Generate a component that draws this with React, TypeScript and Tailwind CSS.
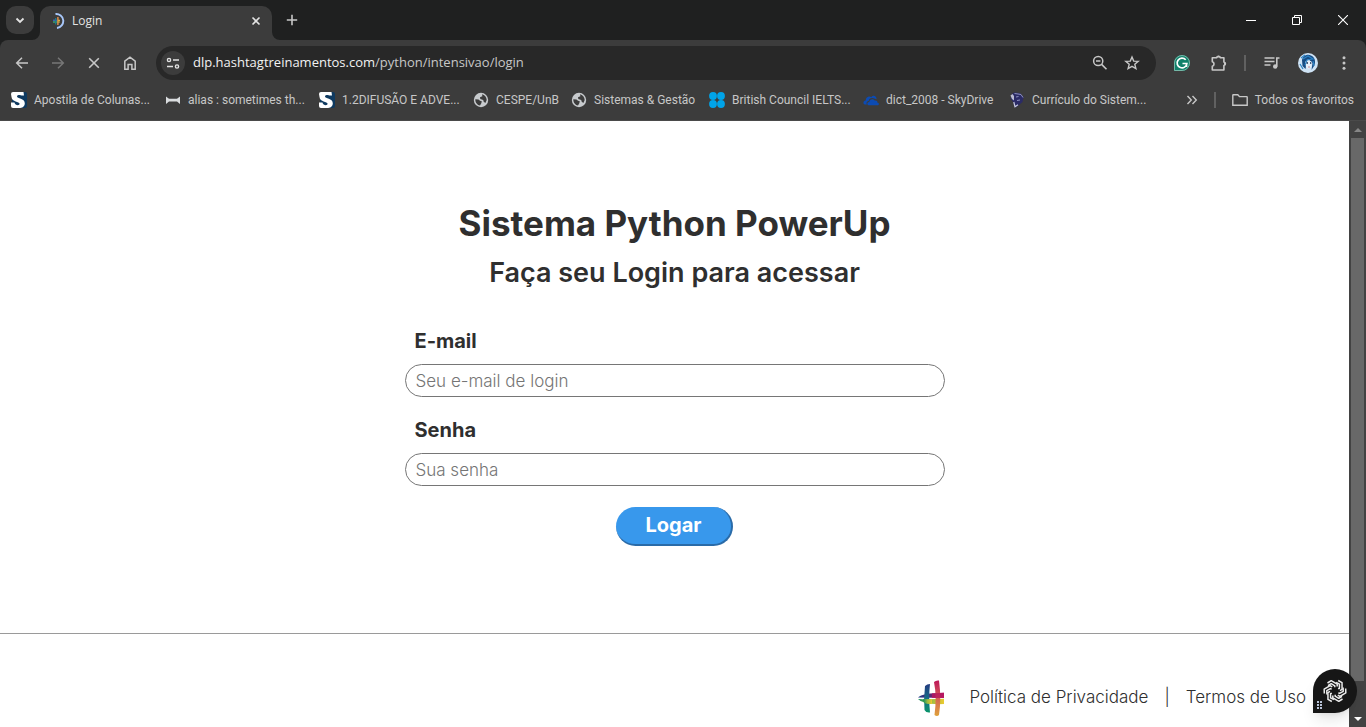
import type { ReactNode } from "react";

type IconProps = { className?: string; children: ReactNode; size?: number; viewBox?: string };

function Icon({ className = "", children, size = 16, viewBox = "0 0 16 16" }: IconProps) {
  return (
    <svg
      width={size}
      height={size}
      viewBox={viewBox}
      fill="none"
      stroke="currentColor"
      strokeWidth="1.5"
      className={"shrink-0 " + className}
      aria-hidden="true"
    >
      {children}
    </svg>
  );
}

function ScribdIcon() {
  return (
    <Icon>
      <rect x="1" width="15" height="16" rx="2" fill="#0f3a60" stroke="none" />
      <path d="M0 2Q0 0 2 0H12.500L13 3.500H10.500C9.500 2.700 6 2.700 6 4.600C6 7 13.800 6.200 13.800 11.200C13.800 14.500 11 16 8 16H2Q0 16 0 14V10.500H3.500C4 13.800 8.800 13.700 8.600 11.800C8.400 9.700 1 10 .500 5Z" fill="#fff" stroke="none" />
    </Icon>
  );
}

function BoneIcon() {
  return (
    <Icon>
      <path d="M1 4.500L4 6.700H12L15 4.500V12L12 9.600H4L1 12Z" fill="#d9dcde" stroke="none" />
    </Icon>
  );
}

function GlobeIcon() {
  return (
    <Icon>
      <circle cx="8" cy="8" r="7.200" fill="#c7cacd" stroke="none" />
      <path d="M2.300 7.200L5.500 7.400L7 8.800L8.800 9.300L8.300 11.200L7 13.500C4.500 13.300 2.200 10.600 2.300 7.200ZM9 2.300C11.700 2.900 13.600 5.200 13.700 8L12.400 11L10.700 9.800L10.200 7.900L7.300 6.900L7 5.200L9.400 4.200Z" fill="#3c3c3c" stroke="none" />
    </Icon>
  );
}

function BritishCouncilIcon() {
  return (
    <Icon>
      <g fill="#00a3e8" stroke="none">
        <circle cx="4" cy="4" r="3.900" />
        <circle cx="12" cy="4" r="3.900" />
        <circle cx="4" cy="12" r="3.900" />
        <circle cx="12" cy="12" r="3.900" />
      </g>
    </Icon>
  );
}

function CloudIcon() {
  return (
    <Icon>
      <path d="M2.500 12.500C-.500 12.500 0 8.500 2.700 8.600C2.600 5.200 6.200 3.500 8.300 5.200C10.200 2.300 13.800 4 13.600 7.200L10.500 6.300C8 5.600 5.800 6.800 5.700 9C3.500 9.300 3 11.300 4 12.500Z" fill="#0c4bb3" stroke="none" />
      <path d="M6 13.300C3.700 13.300 3.800 9.900 6.300 9.900C6.500 7 10.200 6.300 11.700 8.600C13.800 8 14.700 9.800 14.300 10.500C16.500 10.600 16.300 13.300 14.400 13.300Z" fill="#0c4bb3" stroke="none" />
    </Icon>
  );
}

function LattesIcon() {
  return (
    <Icon>
      <path d="M5 .500L11 1L14.500 5L13.500 10L7 15.500L5 14L4.500 10.500L1.500 6.500L3 2Z" fill="#2b2b66" stroke="none" />
      <path d="M1.500 3.500L3.500 2L5 4V8.500L3 7Z" fill="#b9bbd0" stroke="none" />
      <path d="M5.500 1.500L9 2L12 2.500L14 5.500M7 5L9.500 4.500M8 8.500L11 8" stroke="#8f92c0" strokeWidth="1" />
      <path d="M4.800 10L6 14.800L9 12.800" stroke="#c9cbe2" strokeWidth="1.200" />
    </Icon>
  );
}

const bookmarks: { label: string; icon: ReactNode; width: string }[] = [
  { label: "Apostila de Colunas...", icon: <ScribdIcon />, width: "w-[154px]" },
  { label: "alias : sometimes th...", icon: <BoneIcon />, width: "w-[154px]" },
  { label: "1.2DIFUSÃO E ADVE...", icon: <ScribdIcon />, width: "w-[154px]" },
  { label: "CESPE/UnB", icon: <GlobeIcon />, width: "w-[98px]" },
  { label: "Sistemas & Gestão", icon: <GlobeIcon />, width: "w-[138px]" },
  { label: "British Council IELTS...", icon: <BritishCouncilIcon />, width: "w-[154px]" },
  { label: "dict_2008 - SkyDrive", icon: <CloudIcon />, width: "w-[146px]" },
  { label: "Currículo do Sistem...", icon: <LattesIcon />, width: "w-[154px]" },
];

function TabStrip() {
  return (
    <header className="flex h-10 shrink-0 items-end bg-[#1f2020] pl-1.5 text-[#e3e3e3]">
      <button aria-label="Pesquisar guias" className="mb-1.5 flex size-7 items-center justify-center rounded-[10px] bg-[#3c3c3c]">
        <Icon>
          <path d="M4.500 6.500L8 10L11.500 6.500" strokeWidth="1.800" />
        </Icon>
      </button>
      <div className="relative ml-1.5 flex h-[34px] w-[232px] items-center rounded-t-[10px] bg-[#3c3c3c] pr-2 pl-2.5">
        <svg className="absolute bottom-0 -left-2" width="8" height="8" aria-hidden="true">
          <path d="M8 0V8H0A8 8 0 0 0 8 0Z" fill="#3c3c3c" />
        </svg>
        <svg className="absolute -right-2 bottom-0" width="8" height="8" aria-hidden="true">
          <path d="M0 0V8H8A8 8 0 0 1 0 0Z" fill="#3c3c3c" />
        </svg>
        <Icon className="mb-1">
          <path d="M5.500 1A7 7 0 1 1 7 15" stroke="#a8c7fa" strokeWidth="1.900" />
          <path d="M3 7.300H7" stroke="#3d5fb0" strokeWidth="1.500" />
          <path d="M3 9H8" stroke="#3fa06b" strokeWidth="1.500" />
          <path d="M5.700 5V11.500" stroke="#1b7d8c" strokeWidth="1.300" />
          <path d="M7.900 4V12" stroke="#dc8a4a" strokeWidth="1.500" />
          <path d="M8 7.300H10M8 9H10" stroke="#d7b33c" strokeWidth="1.200" />
        </Icon>
        <span className="mb-1 ml-1.5 flex-1 text-xs">Login</span>
        <button aria-label="Fechar guia" className="mb-1 flex size-4 items-center justify-center">
          <Icon>
            <path d="M4.500 4.500L11.500 11.500M11.500 4.500L4.500 11.500" strokeWidth="1.600" />
          </Icon>
        </button>
      </div>
      <button aria-label="Nova guia" className="mb-1.5 ml-1.5 flex size-7 items-center justify-center text-[#c7c7c7]">
        <Icon>
          <path d="M8 2.800V13.200M2.800 8H13.200" strokeWidth="1.600" />
        </Icon>
      </button>
      <div className="ml-auto flex h-full text-white">
        <button aria-label="Minimizar" className="flex w-[46px] items-center justify-center">
          <Icon size={10} viewBox="0 0 10 10">
            <path d="M0 5.500H10" strokeWidth="1" />
          </Icon>
        </button>
        <button aria-label="Restaurar" className="flex w-[46px] items-center justify-center">
          <Icon size={10} viewBox="0 0 10 10">
            <path d="M.500 2.500H7.500V9.500H.500ZM2.500 2.500V.500H9.500V7.500H7.500" strokeWidth="1" />
          </Icon>
        </button>
        <button aria-label="Fechar" className="flex w-[46px] items-center justify-center">
          <Icon size={10} viewBox="0 0 10 10">
            <path d="M0 0L10 10M10 0L0 10" strokeWidth="1.100" />
          </Icon>
        </button>
      </div>
    </header>
  );
}

function ToolButton({ label, children, className = "" }: { label: string; children: ReactNode; className?: string }) {
  return (
    <button aria-label={label} className={"flex h-8 w-9 shrink-0 items-center justify-center " + className}>
      {children}
    </button>
  );
}

function Toolbar() {
  return (
    <div className="flex h-[46px] items-center px-1 text-[#c7c7c7]">
      <ToolButton label="Voltar">
        <Icon>
          <path d="M14 8H3M8 2.700L2.700 8L8 13.300" />
        </Icon>
      </ToolButton>
      <ToolButton label="Avançar" className="text-[#777777]">
        <Icon>
          <path d="M2 8H13M8 2.700L13.300 8L8 13.300" />
        </Icon>
      </ToolButton>
      <ToolButton label="Parar">
        <Icon>
          <path d="M3.200 3.200L12.800 12.800M12.800 3.200L3.200 12.800" strokeWidth="1.600" />
        </Icon>
      </ToolButton>
      <ToolButton label="Página inicial">
        <Icon>
          <path d="M2.800 6.200L8 2.100L13.200 6.200V14.200H9.900V9.400H6.100V14.200H2.800Z" />
        </Icon>
      </ToolButton>
      <div className="ml-2 flex h-[34px] flex-1 items-center rounded-full bg-[#282828] pr-2 pl-[5px]">
        <button aria-label="Informações do site" className="flex size-6 shrink-0 items-center justify-center rounded-full bg-[#3c3c3c] text-[#e3e3e3]">
          <Icon>
            <path d="M8 5H14M2 11.500H8" strokeWidth="1.400" />
            <circle cx="4" cy="5" r="1.600" strokeWidth="1.400" />
            <circle cx="12" cy="11.500" r="1.600" strokeWidth="1.400" />
          </Icon>
        </button>
        <div className="ml-2 flex-1 text-[13px] whitespace-nowrap text-[#c7c7c7]">
          <span className="text-[#f2f2f2]">dlp.hashtagtreinamentos.com</span>/python/intensivao/login
        </div>
        <button aria-label="Zoom" className="flex w-8 items-center justify-center">
          <Icon>
            <circle cx="6.200" cy="6" r="4.600" />
            <path d="M9.600 9.400L14.500 14.300M4 6H8.400" strokeWidth="1.600" />
          </Icon>
        </button>
        <button aria-label="Adicionar aos favoritos" className="flex w-8 items-center justify-center">
          <Icon>
            <path d="M8 2L9.700 6.100L14.200 6.400L10.800 9.300L11.900 13.600L8 11.300L4.100 13.600L5.200 9.300L1.800 6.400L6.300 6.100Z" strokeWidth="1.400" />
          </Icon>
        </button>
      </div>
      <ToolButton label="Grammarly" className="ml-2">
        <Icon>
          <path d="M0 8A8 8 0 1 1 8 16H0Z" fill="#11806a" stroke="none" />
          <path d="M.500 15.500V8A7.500 7.500 0 1 1 8 15.500Z" stroke="#8fc5b8" strokeWidth=".800" />
          <path d="M11.700 4.700A4.900 4.900 0 1 0 12.900 8.500H8.500M12.500 8.500V12" stroke="#fff" strokeWidth="1.700" />
        </Icon>
      </ToolButton>
      <ToolButton label="Extensões">
        <Icon size={18} viewBox="-1 0 18 18">
          <path d="M2.300 3.700H6.600A2 2 0 0 1 10.400 3.700H13.900V8A1.900 1.900 0 0 1 13.900 11.600V16H2.300V12.300A2.400 2.400 0 0 0 2.300 7.700Z" strokeWidth="1.600" strokeLinejoin="round" />
          <path d="M6.700 3.500V2.500Q8.500 .900 10.300 2.500V3.500ZM14 8.200H15.500Q17 9.700 15.500 11.300H14Z" fill="currentColor" stroke="none" />
        </Icon>
      </ToolButton>
      <div className="mx-2 h-4 w-0.5 shrink-0 bg-[#616161]" />
      <ToolButton label="Controle de mídia">
        <Icon>
          <path d="M.500 3H10.500M.500 6.500H10.500M.500 10H6.500M15.500 3H12.800V11.500" strokeWidth="1.600" />
          <circle cx="11.200" cy="11.500" r="2.200" fill="currentColor" stroke="none" />
        </Icon>
      </ToolButton>
      <ToolButton label="Perfil">
        <Icon size={20} viewBox="0 0 20 20">
          <circle cx="10" cy="10" r="10" fill="#cfe3f5" stroke="none" />
          <path d="M4 7C5 3 9 .500 13 2.500C17 4 18 9 16 13L13.500 17L14.500 10L10 6L8.500 10L7.500 16L4.500 13Z" fill="#174b83" stroke="none" />
          <path d="M7 9L10 6.500L14 9L13 14L10.500 16L8 14Z" fill="#e7eef8" stroke="none" />
          <path d="M5 6L10 3L15 6L9 7L7 12M15 8L16 13M2 11L5 16M3 5L7 2" stroke="#2c83c5" strokeWidth="1.200" />
          <path d="M8.500 10H10M12 10H13.300" stroke="#122c52" strokeWidth="1.400" />
          <path d="M10 14H12" stroke="#c4737c" strokeWidth=".800" />
        </Icon>
      </ToolButton>
      <ToolButton label="Mais opções">
        <Icon>
          <g fill="currentColor" stroke="none">
            <circle cx="8" cy="2.700" r="1.500" />
            <circle cx="8" cy="8" r="1.500" />
            <circle cx="8" cy="13.300" r="1.500" />
          </g>
        </Icon>
      </ToolButton>
    </div>
  );
}

function BookmarksBar() {
  return (
    <nav aria-label="Favoritos" className="flex h-[35px] items-center border-b border-[#4a4a4a] pr-3 pb-1.5 pl-[11px] font-['Roboto',sans-serif] text-xs whitespace-nowrap text-[#c7c7c7]">
      {bookmarks.map((b) => (
        <a key={b.label} href="#" className={"flex shrink-0 items-center gap-[7px] " + b.width}>
          {b.icon}
          <span>{b.label}</span>
        </a>
      ))}
      <div className="ml-auto flex items-center">
        <button aria-label="Mais favoritos">
          <Icon>
            <path d="M3.500 4L7.300 8L3.500 12M8.500 4L12.300 8L8.500 12" strokeWidth="1.400" />
          </Icon>
        </button>
        <div className="mr-4 ml-3.5 h-4 w-0.5 bg-[#616161]" />
        <a href="#" className="flex items-center gap-[7px]">
          <Icon>
            <path d="M.800 3.200Q.800 2.700 1.300 2.700H5.800L7.500 4.600H14.700Q15.200 4.600 15.200 5.100V13.300H.800Z" strokeWidth="1.400" />
          </Icon>
          <span>Todos os favoritos</span>
        </a>
      </div>
    </nav>
  );
}

function HashtagLogo() {
  return (
    <svg width="28" height="38" viewBox="0 0 28 38" aria-hidden="true">
      <defs>
        <linearGradient id="logo-left" x1="0" y1="0" x2="0" y2="1">
          <stop offset="0" stopColor="#243a80" />
          <stop offset=".5" stopColor="#156b87" />
          <stop offset="1" stopColor="#08956a" />
        </linearGradient>
        <linearGradient id="logo-right" x1="0" y1="0" x2="0" y2="1">
          <stop offset="0" stopColor="#bd1659" />
          <stop offset=".45" stopColor="#d45b58" />
          <stop offset="1" stopColor="#dfa23b" />
        </linearGradient>
        <linearGradient id="logo-top">
          <stop offset="0" stopColor="#173b86" />
          <stop offset=".5" stopColor="#622376" />
          <stop offset="1" stopColor="#bd1762" />
        </linearGradient>
        <linearGradient id="logo-bottom">
          <stop offset="0" stopColor="#078c5c" />
          <stop offset=".5" stopColor="#9bbc40" />
          <stop offset="1" stopColor="#ecca30" />
        </linearGradient>
      </defs>
      <path d="M1 18.500Q5 14 27 13.700V19Z" fill="url(#logo-top)" />
      <path d="M8 7Q10 5 13 5Q11.500 18 13 33.500Q9 34 7.500 31Q6.500 20 8 7Z" fill="url(#logo-left)" />
      <path d="M1 20Q13 20.500 27 19.700V25Q6 26 1 20Z" fill="url(#logo-bottom)" />
      <path d="M17 3Q19 1 22 1.500Q24.500 20 22 36Q20 38 17.500 36Q20 18 17 3Z" fill="url(#logo-right)" />
      <path d="M15 14.200Q22 13.700 27 13.700V19H15Z" fill="#b7175f" fillOpacity=".8" />
      <path d="M6 20.200L15 20.300V25Q10 25.200 7 24Z" fill="url(#logo-bottom)" />
    </svg>
  );
}

function Field({ id, label, type, placeholder }: { id: string; label: string; type: string; placeholder: string }) {
  return (
    <div className="flex flex-col">
      <label htmlFor={id} className="pl-2.5 text-[20px] leading-6 font-bold">
        {label}
      </label>
      <input
        id={id}
        type={type}
        placeholder={placeholder}
        className="mt-[11px] h-[33px] w-full rounded-full border border-[#767676] bg-white px-2.5 text-[17px] font-light placeholder:text-[#757575]"
      />
    </div>
  );
}

function AssistantWidget() {
  return (
    <button
      aria-label="Assistente"
      className="absolute right-[9px] bottom-3.5 flex size-11 items-center justify-center rounded-full rounded-bl-sm bg-[#161616] text-[#ececec] shadow-lg"
    >
      <Icon size={26} viewBox="-13 -13 26 26">
        {[0, 60, 120, 180, 240, 300].map((a) => (
          <path
            key={a}
            transform={`rotate(${a})`}
            d="M-7.500 -8L-3.800 -10.300L2.200 -6.900V-4.500M-7 -5.300L-3.800 -7.300L-.200 -5.200V-3.800"
            strokeWidth="1.500"
            strokeLinejoin="round"
          />
        ))}
      </Icon>
      <svg className="absolute bottom-1 left-1" width="5" height="8" fill="#b9c4d8" aria-hidden="true">
        <path d="M0 0H2V2H0ZM3 0H5V2H3ZM0 3H2V5H0ZM3 3H5V5H3ZM0 6H2V8H0ZM3 6H5V8H3Z" />
      </svg>
    </button>
  );
}

function Scrollbar() {
  return (
    <div className="flex w-[17px] shrink-0 flex-col items-center bg-[#424242]" aria-hidden="true">
      <div className="flex h-[17px] items-center">
        <svg width="8" height="4" fill="#868686"><path d="M0 4L4 0L8 4Z" /></svg>
      </div>
      <div className="w-[13px] flex-1 bg-[#686868]" />
      <div className="h-[29px]" />
      <div className="flex h-[17px] items-center">
        <svg width="8" height="4" fill="#fff"><path d="M0 0L4 4L8 0Z" /></svg>
      </div>
    </div>
  );
}

export default function App() {
  return (
    <div className="relative flex h-screen flex-col overflow-hidden bg-[#1f2020] font-['Open_Sans','Noto_Sans',sans-serif]">
      <TabStrip />
      <div className="shrink-0 rounded-t-lg bg-[#3c3c3c]">
        <Toolbar />
        <BookmarksBar />
      </div>
      <div className="flex min-h-0 flex-1 bg-white font-['Inter',sans-serif] text-[#2f2f2f]">
        <div className="flex min-w-0 flex-1 flex-col">
          <main className="flex flex-col items-center px-4 pt-20 pb-[87px]">
            <h1 className="text-[35px] leading-11 font-bold">Sistema Python PowerUp</h1>
            <h2 className="mt-3 text-[27px] leading-8 font-semibold">Faça seu Login para acessar</h2>
            <form className="mt-10 flex w-full max-w-[540px] flex-col gap-[21px]" onSubmit={(e) => e.preventDefault()}>
              <Field id="email" label="E-mail" type="email" placeholder="Seu e-mail de login" />
              <Field id="senha" label="Senha" type="password" placeholder="Sua senha" />
              <button
                type="submit"
                className="h-[39px] w-[117px] self-center rounded-full border-r-2 border-b-2 border-[#2a6ba8] bg-[#3898ec] pb-0.5 text-[20px] leading-6 font-bold text-white"
              >
                Logar
              </button>
            </form>
          </main>
          <footer className="flex flex-1 items-center justify-end border-t border-[#9a9a9a] pt-[34px] pr-[43px] text-[17px] font-light">
            <HashtagLogo />
            <a href="#" className="ml-6">Política de Privacidade</a>
            <span className="mx-4">|</span>
            <a href="#">Termos de Uso</a>
          </footer>
        </div>
        <Scrollbar />
      </div>
      <AssistantWidget />
    </div>
  );
}
